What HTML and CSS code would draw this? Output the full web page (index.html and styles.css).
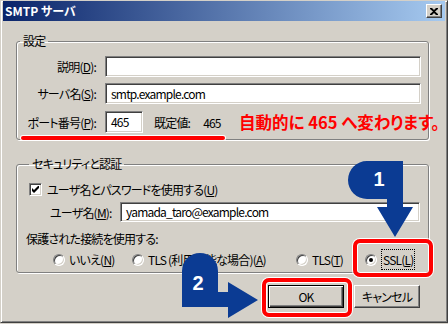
FILE: index.html
```html
<!DOCTYPE html>
<html lang="ja">
<head>
  <meta charset="UTF-8" />
  <title>SMTP サーバ</title>
  <link rel="stylesheet" href="styles.css">
</head>
<body>

<div class="screen">
  <div class="window">
    <!-- title bar -->
    <div class="titlebar">
      <span class="title">SMTP サーバ</span>
      <span class="close">
        <svg width="8" height="7" viewBox="0 0 8 7"><path d="M0 0h2l2 2 2-2h2v1L5 3.5 8 6v1H6L4 5 2 7H0V6l3-2.5L0 1z" fill="#000"/></svg>
      </span>
    </div>

    <div class="content">
      <!-- settings group -->
      <fieldset class="group group-settings">
        <legend>設定</legend>
        <div class="form-grid">
          <label>説明(<u>D</u>):</label>
          <div class="field"></div>
          <label>サーバ名(<u>S</u>):</label>
          <div class="field">smtp.example.com</div>
          <label class="port-label">ポート番号(<u>P</u>):</label>
          <div class="port-row">
            <div class="field port">465</div>
            <span class="default-label">既定値:</span>
            <span class="default-value">465</span>
          </div>
        </div>
      </fieldset>

      <!-- security group -->
      <fieldset class="group group-security">
        <legend>セキュリティと認証</legend>
        <div class="check-row">
          <span class="checkbox">
            <svg width="7" height="7" viewBox="0 0 7 7"><path d="M0 2v3l2 2 5-5V-1L2 4z" fill="#000"/></svg>
          </span>
          <span>ユーザ名とパスワードを使用する(<u>U</u>)</span>
        </div>
        <div class="user-row">
          <label>ユーザ名(<u>M</u>):</label>
          <div class="field">yamada_taro@example.com</div>
        </div>
        <div class="conn-label">保護された接続を使用する:</div>
        <div class="radio-row">
          <span class="radio-item"><span class="radio"></span>いいえ(<u>N</u>)</span>
          <span class="radio-item"><span class="radio"></span>TLS (利用可能な場合)(<u>A</u>)</span>
          <span class="radio-item"><span class="radio"></span>TLS(<u>T</u>)</span>
          <span class="radio-item"><span class="radio checked"></span><span class="focus">SSL(<u>L</u>)</span></span>
        </div>
      </fieldset>

      <div class="buttons">
        <span class="btn btn-default">OK</span>
        <span class="btn btn-cancel">キャンセル</span>
      </div>
    </div>
  </div>

  <!-- annotations -->
  <div class="note">自動的に 465 へ変わります。</div>
  <div class="underline"></div>
  <div class="mark mark-ssl"></div>
  <div class="mark mark-ok"></div>
  <svg class="arrows" width="448" height="324" viewBox="0 0 448 324">
    <path d="M403 161H367A19 19 0 0 0 367 199H387V207H377L395 237L413 207H403Z" fill="#0b3b93"/>
    <text x="379" y="186" class="step">1</text>
    <path d="M182 307V271A18 18 0 0 1 218 271V292H228V282L258 300L228 318V307Z" fill="#0b3b93"/>
    <text x="198" y="290" class="step">2</text>
  </svg>
</div>

</body>
</html>
```

FILE: styles.css
```css
body {
  margin: 0;
  font-family: "Noto Sans CJK JP", sans-serif;
  font-size: 12px;
  font-feature-settings: "palt";
  letter-spacing: -0.8px;
  color: #000;
  background: #d4d0c8;
}
.screen {
  position: relative;
  width: 448px;
  height: 324px;
  overflow: hidden;
}
.window {
  box-sizing: border-box;
  width: 448px;
  height: 323px;
  background: #d4d0c8;
  border: 1px solid;
  border-color: #d4d0c8 #404040 #404040 #d4d0c8;
  padding: 0 2px 2px 2px;
  box-shadow: inset 1px 1px #fff, inset -1px -1px #808080;
}
.titlebar {
  display: flex;
  align-items: center;
  height: 20px;
  padding: 0 3px 0 2px;
  background: linear-gradient(to right, #0a246a, #a6caf0);
}
.title {
  flex: 1;
  color: #fff;
  font-weight: bold;
  letter-spacing: 0;
  line-height: 20px;
}
.close {
  display: flex;
  align-items: center;
  justify-content: center;
  box-sizing: border-box;
  width: 16px;
  height: 14px;
  background: #d4d0c8;
  border: 1px solid;
  border-color: #fff #404040 #404040 #fff;
  box-shadow: inset -1px -1px #808080;
}
.content {
  padding: 0 16px 0 13px;
}
.group {
  margin: 0;
  border: 1px solid #808080;
  border-radius: 3px;
  box-shadow: 1px 1px #fff, inset 1px 1px #fff;
  min-width: 0;
}
.group legend {
  margin-left: 3px;
  padding: 0 3px;
  line-height: 14px;
}
.group-settings {
  margin-top: 13px;
  padding: 8px 7px 6px 0;
}
.form-grid {
  display: grid;
  grid-template-columns: 79px 1fr;
  column-gap: 9px;
  row-gap: 6px;
  align-items: center;
}
.form-grid label {
  text-align: right;
}
.port-label, .port-row {
  margin-top: 1px;
}
.field {
  box-sizing: border-box;
  height: 21px;
  padding: 0 5px;
  background: #fff;
  border: 1px solid;
  border-color: #808080 #fff #fff #808080;
  box-shadow: inset 1px 1px #404040, inset -1px -1px #d4d0c8;
  line-height: 19px;
}
.port-row {
  display: flex;
  align-items: center;
}
.port {
  width: 38px;
  height: 22px;
  line-height: 20px;
}
.default-label {
  margin-left: 11px;
}
.default-value {
  margin-left: 13px;
}
.group-security {
  margin-top: 17px;
  padding: 10px 8px 7px 9px;
}
.check-row {
  display: flex;
  align-items: center;
  height: 16px;
  margin-left: 3px;
}
.checkbox {
  display: flex;
  align-items: center;
  justify-content: center;
  box-sizing: border-box;
  width: 13px;
  height: 13px;
  margin-right: 5px;
  background: #fff;
  border: 1px solid;
  border-color: #808080 #fff #fff #808080;
  box-shadow: inset 1px 1px #404040, inset -1px -1px #d4d0c8;
}
.user-row {
  display: flex;
  align-items: center;
  margin: 5px 0 0 24px;
}
.user-row label {
  width: 70px;
}
.user-row .field {
  flex: 1;
  height: 20px;
  line-height: 18px;
}
.conn-label {
  margin-top: 10px;
  line-height: 14px;
}
.radio-row {
  display: grid;
  grid-template-columns: 79px 164px 69px auto;
  align-items: center;
  height: 14px;
  margin: 5px 0 0 27px;
}
.radio-item {
  display: flex;
  align-items: center;
  white-space: nowrap;
}
.radio {
  display: flex;
  align-items: center;
  justify-content: center;
  box-sizing: border-box;
  width: 12px;
  height: 12px;
  margin-right: 4px;
  border-radius: 50%;
  background: #fff;
  border: 1px solid;
  border-color: #808080 #fff #fff #808080;
  box-shadow: inset 1px 1px #404040, inset -1px -1px #d4d0c8;
}
.radio.checked::after {
  content: "";
  width: 4px;
  height: 4px;
  border-radius: 50%;
  background: #000;
}
.focus {
  outline: 1px dotted #000;
  outline-offset: 1px;
  margin-left: 2px;
}
.buttons {
  display: flex;
  justify-content: flex-end;
  gap: 10px;
  margin: 12px 9px 0 0;
}
.btn {
  box-sizing: border-box;
  width: 75px;
  height: 23px;
  line-height: 21px;
  text-align: center;
  background: #d4d0c8;
  border: 1px solid;
  border-color: #fff #404040 #404040 #fff;
  box-shadow: inset -1px -1px #808080;
}
.btn-cancel {
  width: 66px;
}
.btn-default {
  width: 76px;
  border-color: #000;
  box-shadow: inset 1px 1px #fff, inset -1px -1px #404040, inset -2px -2px #808080;
}
.note {
  position: absolute;
  left: 239px;
  top: 113px;
  color: #f00;
  font-size: 16.5px;
  font-weight: bold;
  letter-spacing: 0;
  line-height: 19px;
  white-space: nowrap;
}
.underline {
  position: absolute;
  left: 21px;
  top: 136px;
  width: 204px;
  height: 4px;
  border-radius: 2px;
  background: #f00;
  box-shadow: 0 0 0 1px #fff;
}
.mark {
  position: absolute;
  box-sizing: border-box;
  border: 4px solid #f00;
  border-radius: 7px;
  box-shadow: 0 0 0 1px #fff, inset 0 0 0 1px #fff;
}
.mark-ssl {
  left: 353px;
  top: 239px;
  width: 80px;
  height: 38px;
}
.mark-ok {
  left: 262px;
  top: 278px;
  width: 90px;
  height: 39px;
}
.arrows {
  position: absolute;
  left: 0;
  top: 0;
}
.step {
  fill: #fff;
  font-family: "Liberation Sans", sans-serif;
  font-size: 20px;
  font-weight: bold;
  letter-spacing: 0;
  text-anchor: middle;
}
```
